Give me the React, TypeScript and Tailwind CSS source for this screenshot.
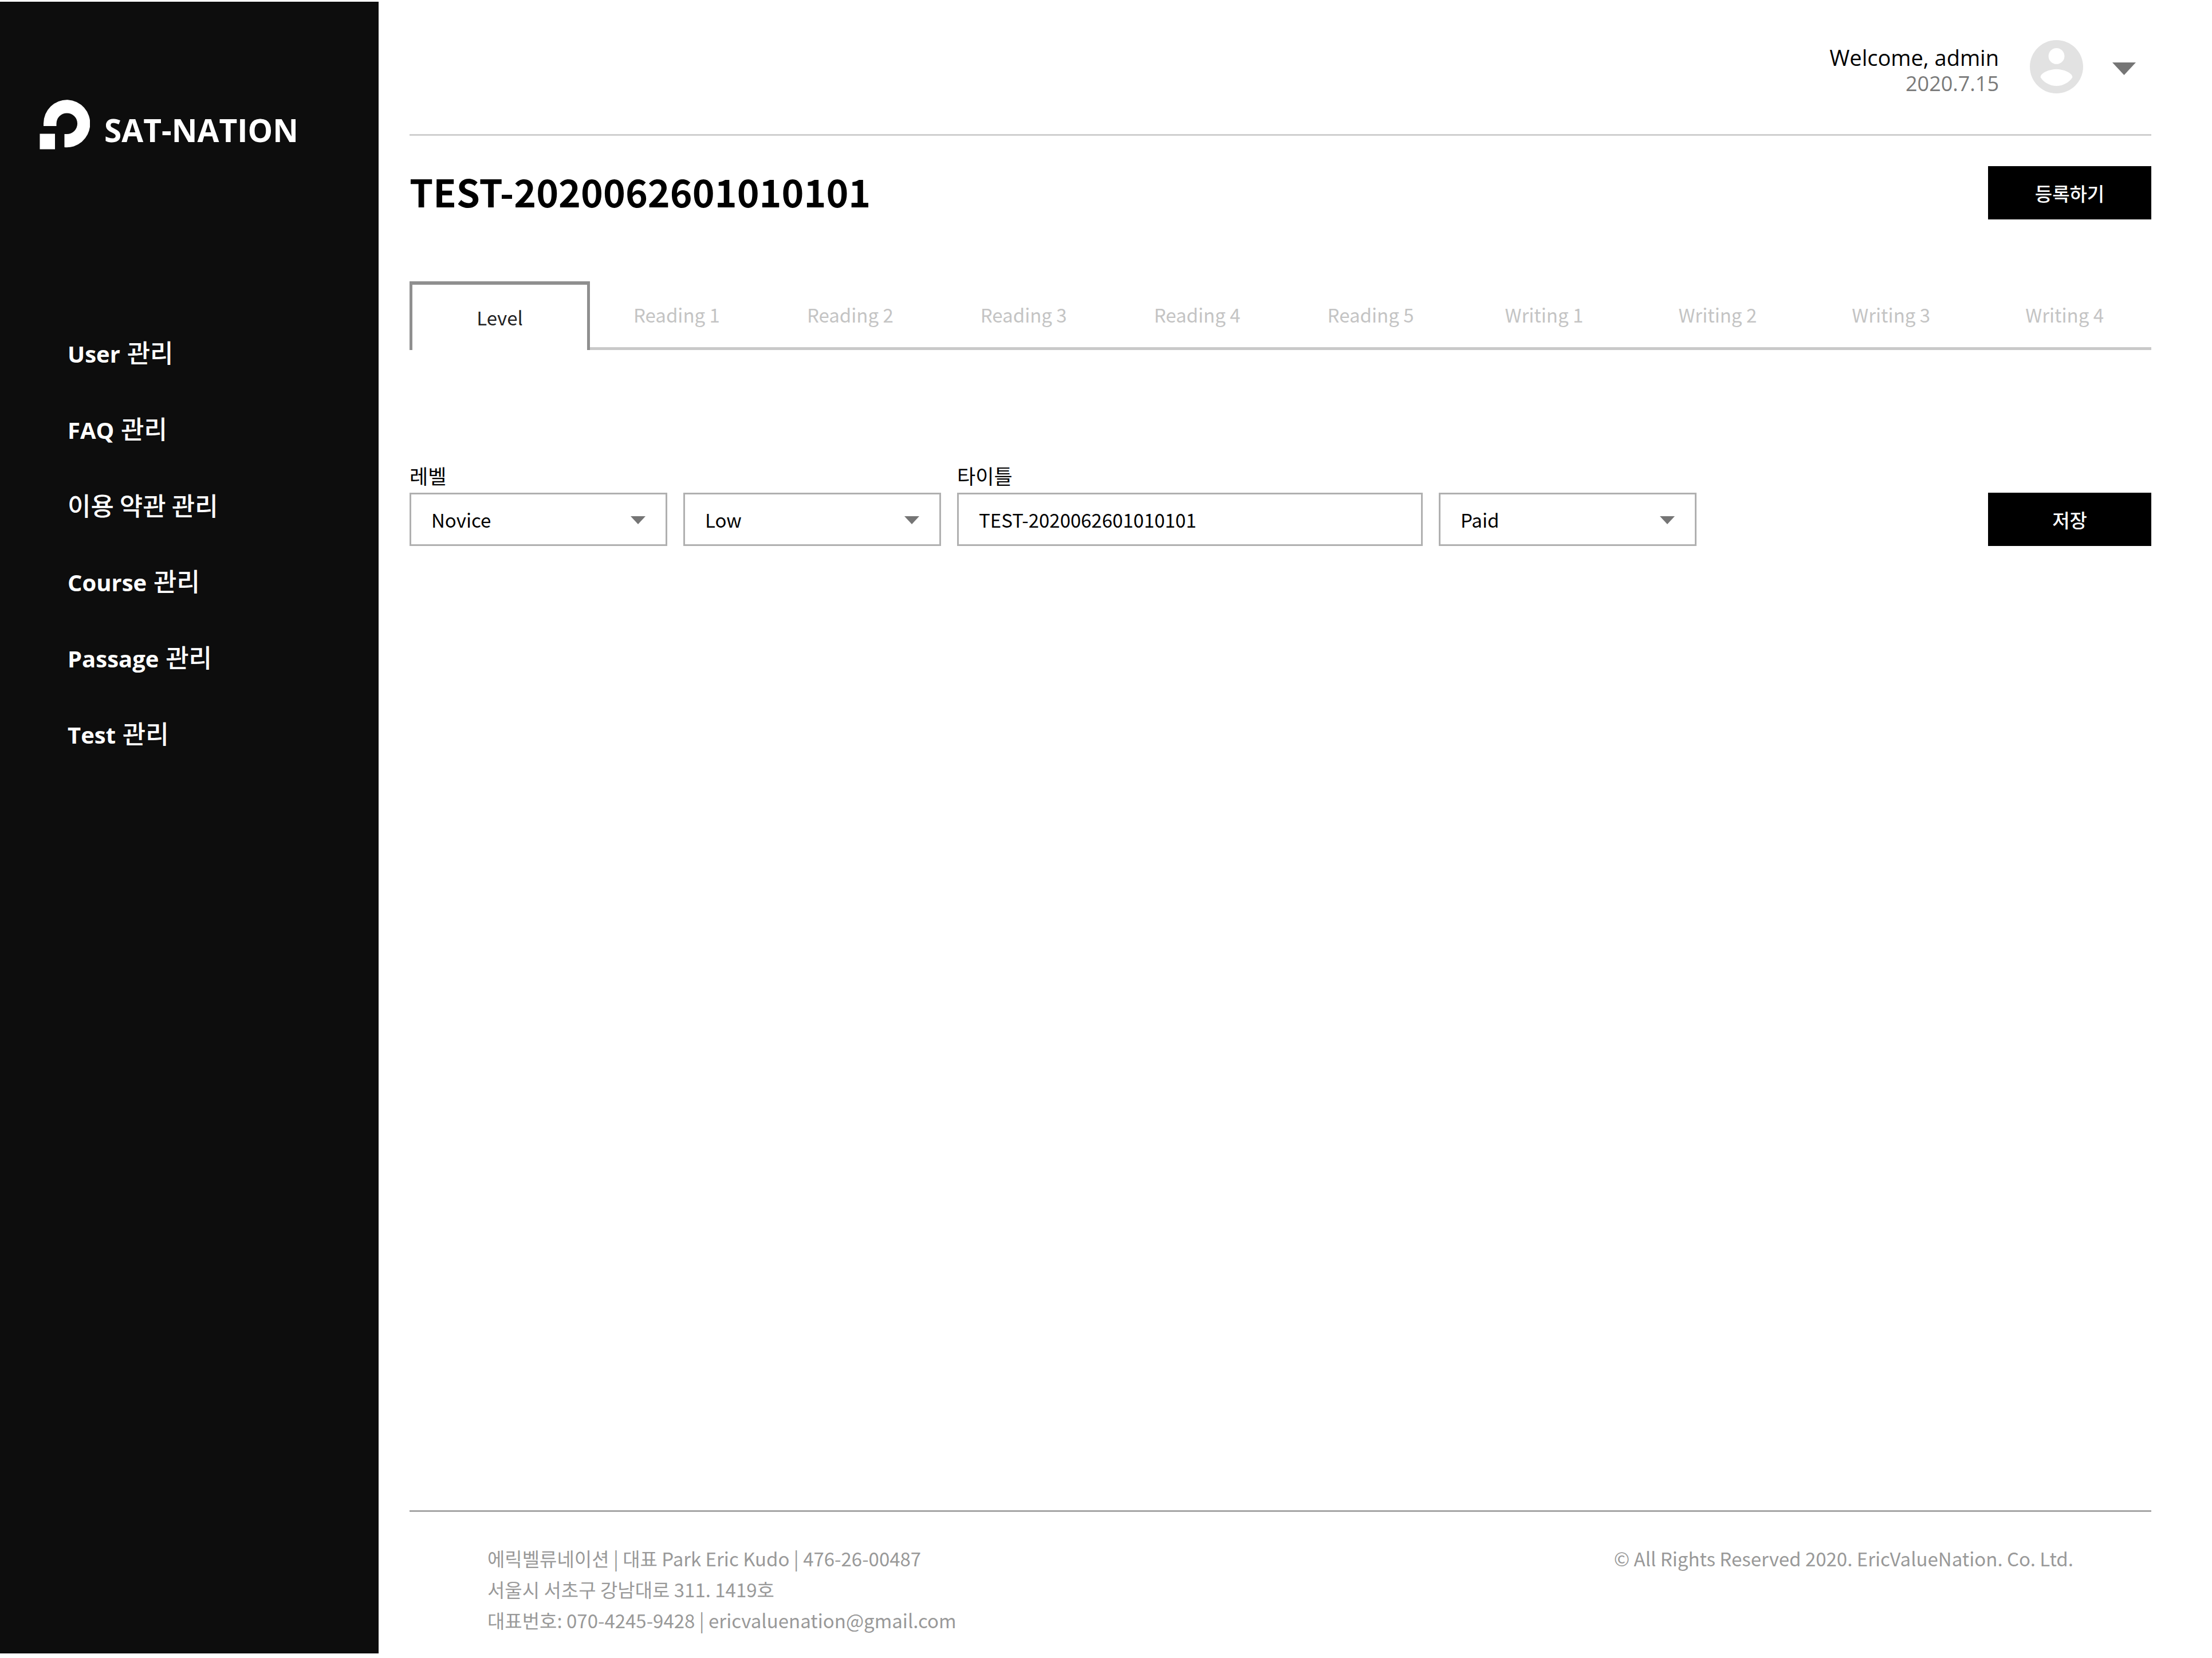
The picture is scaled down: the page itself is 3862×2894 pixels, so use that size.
import { useState } from 'react';

const menu: { latin?: string; hangul: string }[] = [
  { latin: 'User', hangul: '관리' },
  { latin: 'FAQ', hangul: '관리' },
  { hangul: '이용 약관 관리' },
  { latin: 'Course', hangul: '관리' },
  { latin: 'Passage', hangul: '관리' },
  { latin: 'Test', hangul: '관리' },
];

const tabs = [
  'Reading 1',
  'Reading 2',
  'Reading 3',
  'Reading 4',
  'Reading 5',
  'Writing 1',
  'Writing 2',
  'Writing 3',
  'Writing 4',
];

function Logo() {
  return (
    <svg className="h-[87px] w-[88px] shrink-0" viewBox="0 0 88 87" fill="#fff" aria-hidden="true">
      <rect x="0.500" y="59.500" width="26.500" height="27" />
      <path d="M7 46V41.500A40.700 41.500 0 1 1 43.500 83V60H47.700A18.300 18.300 0 1 0 29.500 41.700V46Z" />
    </svg>
  );
}

function Sidebar() {
  return (
    <aside className="w-[661px] shrink-0 bg-[#0d0d0d] pt-[171px] text-white">
      <a href="#" className="flex items-end gap-[25px] pl-[69px]">
        <Logo />
        <span className="font-['Open_Sans',sans-serif] text-[55px] leading-[68px] font-bold">SAT-NATION</span>
      </a>
      <nav className="mt-[288px]">
        <ul className="pl-[118px]">
          {menu.map((item) => (
            <li key={(item.latin ?? '') + item.hangul} className="flex h-[133px] items-center">
              <a href="#" className="block font-['Open_Sans',sans-serif] text-[45px] leading-[60px]">
                {item.latin && (
                  <>
                    <span className="text-[40px] font-bold">{item.latin}</span>{' '}
                  </>
                )}
                <span className="font-['Noto_Sans_CJK_KR',sans-serif] text-[44px] font-medium">{item.hangul}</span>
              </a>
            </li>
          ))}
        </ul>
      </nav>
    </aside>
  );
}

function Header() {
  return (
    <header className="flex items-start justify-end border-b-[3px] border-[#cfcfcf] pt-[67px] pr-[27px] pb-[66px]">
      <div className="pt-[8px] text-right font-['Open_Sans',sans-serif] leading-[45px]">
        <p className="text-[38px] text-black">Welcome, admin</p>
        <p className="text-[36px] text-[#7a7a7a]">2020.7.15</p>
      </div>
      <svg className="ml-[54px] size-[93px]" viewBox="2 2 20 20" fill="#e2e2e2" role="img" aria-label="admin">
        <path d="M12 2C6.480 2 2 6.480 2 12s4.480 10 10 10 10-4.480 10-10S17.520 2 12 2zm0 3c1.660 0 3 1.340 3 3s-1.340 3-3 3-3-1.340-3-3 1.340-3 3-3zm0 14.200c-2.500 0-4.710-1.280-6-3.220.030-1.990 4-3.080 6-3.080 1.990 0 5.970 1.090 6 3.080-1.290 1.940-3.500 3.220-6 3.220z" />
      </svg>
      <button type="button" aria-label="계정 메뉴" className="mt-[39px] ml-[51px]">
        <svg className="h-[22px] w-[41px]" viewBox="0 0 41 22" fill="#757575">
          <path d="M0 0H41L20.500 22Z" />
        </svg>
      </button>
    </header>
  );
}

function BlackButton({ children }: { children: string }) {
  return (
    <button
      type="button"
      className="h-[93px] w-[285px] shrink-0 bg-black text-[33px] leading-[48px] font-medium text-white"
    >
      {children}
    </button>
  );
}

function Select({ id, label, value, options }: { id: string; label?: string; value: string; options: string[] }) {
  return (
    <div className="relative w-[450px]">
      <select
        id={id}
        aria-label={label}
        defaultValue={value}
        className="block h-[93px] w-full appearance-none border-[3px] border-[#b0b0b0] bg-white pl-[35px] text-[33px] leading-[48px] text-black"
      >
        {options.map((o) => (
          <option key={o}>{o}</option>
        ))}
      </select>
      <svg
        className="pointer-events-none absolute top-[41px] right-[38px] h-[14px] w-[26px]"
        viewBox="0 0 26 14"
        fill="#757575"
        aria-hidden="true"
      >
        <path d="M0 0H26L13 14Z" />
      </svg>
    </div>
  );
}

export default function App() {
  const [title, setTitle] = useState('TEST-2020062601010101');

  return (
    <div className="flex min-h-screen bg-white pt-[3px] pb-[8px] font-['Noto_Sans_CJK_KR',sans-serif] text-black">
      <Sidebar />
      <div className="mr-[106px] ml-[54px] flex min-w-0 flex-1 flex-col">
        <Header />
        <main>
          <div className="mt-[53px] flex items-center justify-between">
            <h1 className="pb-[8px] text-[66px] leading-[84px] font-bold">TEST-2020062601010101</h1>
            <BlackButton>등록하기</BlackButton>
          </div>

          <div role="tablist" className="mt-[108px] flex h-[120px] text-[33px] leading-[48px]">
            <button
              type="button"
              role="tab"
              aria-selected="true"
              className="w-[315px] shrink-0 border-x-[5px] border-t-[6px] border-[#8f8f8f] text-[#222]"
            >
              Level
            </button>
            {tabs.map((tab) => (
              <button
                key={tab}
                type="button"
                role="tab"
                aria-selected="false"
                className="flex-1 border-b-[5px] border-[#c9c9c9] text-[#c4c4c4]"
              >
                {tab}
              </button>
            ))}
          </div>

          <form className="mt-[195px] flex items-end justify-between" onSubmit={(e) => e.preventDefault()}>
            <div className="flex items-end gap-[28px]">
              <div>
                <label htmlFor="level" className="mb-[6px] block text-[35px] leading-[48px]">
                  레벨
                </label>
                <Select id="level" value="Novice" options={['Novice', 'Intermediate', 'Advanced']} />
              </div>
              <Select id="grade" label="세부 레벨" value="Low" options={['Low', 'Mid', 'High']} />
              <div>
                <label htmlFor="title" className="mb-[6px] block text-[35px] leading-[48px]">
                  타이틀
                </label>
                <input
                  id="title"
                  type="text"
                  value={title}
                  onChange={(e) => setTitle(e.target.value)}
                  className="block h-[93px] w-[813px] border-[3px] border-[#b0b0b0] bg-white pl-[35px] text-[33px] leading-[48px]"
                />
              </div>
              <Select id="price" label="가격" value="Paid" options={['Paid', 'Free']} />
            </div>
            <BlackButton>저장</BlackButton>
          </form>
        </main>

        <footer className="mt-auto flex justify-between border-t-[3px] border-[#a6a6a6] px-[136px] pt-[54px] pb-[31px] text-[33px] leading-[54px] text-[#999]">
          <address className="not-italic">
            <p>에릭벨류네이션 | 대표 Park Eric Kudo | 476-26-00487</p>
            <p>서울시 서초구 강남대로 311. 1419호</p>
            <p>대표번호: 070-4245-9428 | ericvaluenation@gmail.com</p>
          </address>
          <p>© All Rights Reserved 2020. EricValueNation. Co. Ltd.</p>
        </footer>
      </div>
    </div>
  );
}
